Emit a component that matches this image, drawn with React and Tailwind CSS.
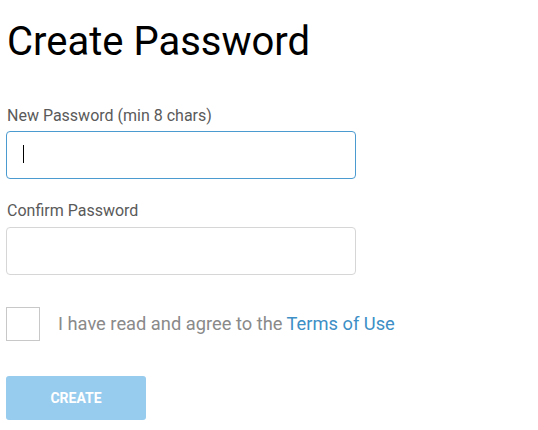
import React from "react";

export default function App() {
  return (
    <div className="min-h-screen bg-white pl-[6px] font-['Roboto',sans-serif]">
      <h1 className="pt-[18px] text-[40px] leading-[48px] font-normal text-black pl-px">Create Password</h1>

      <label className="block mt-[40px] text-[16px] leading-[20px] text-[#5a5a5a] pl-px">New Password (min 8 chars)</label>
      <div className="relative mt-[5px] w-[350px]">
        <input
          type="password"
          className="block w-full h-[48px] rounded-[4px] border border-[#4b9bd0] px-4 outline-none text-[16px]"
        />
        <div className="absolute left-[17px] top-[14px] w-px h-[18px] bg-black" />
      </div>

      <label className="block mt-[22px] text-[16px] leading-[20px] text-[#5a5a5a] pl-px">Confirm Password</label>
      <input
        type="password"
        className="block mt-[6px] w-[350px] h-[48px] rounded-[4px] border border-[#d6d6d6] px-4 outline-none text-[16px]"
      />

      <div className="flex items-center gap-[18px] mt-[32px]">
        <div className="w-[34px] h-[34px] border border-[#c8c8c8] bg-white" />
        <span className="text-[18.3px] leading-[24px] text-[#8a8a8a]">
          I have read and agree to the <a className="text-[#3d8fc6]">Terms of Use</a>
        </span>
      </div>

      <button className="mt-[35px] w-[140px] h-[44px] rounded-[3px] bg-[#98ccee] text-white text-[14px] font-bold">
        CREATE
      </button>
    </div>
  );
}
